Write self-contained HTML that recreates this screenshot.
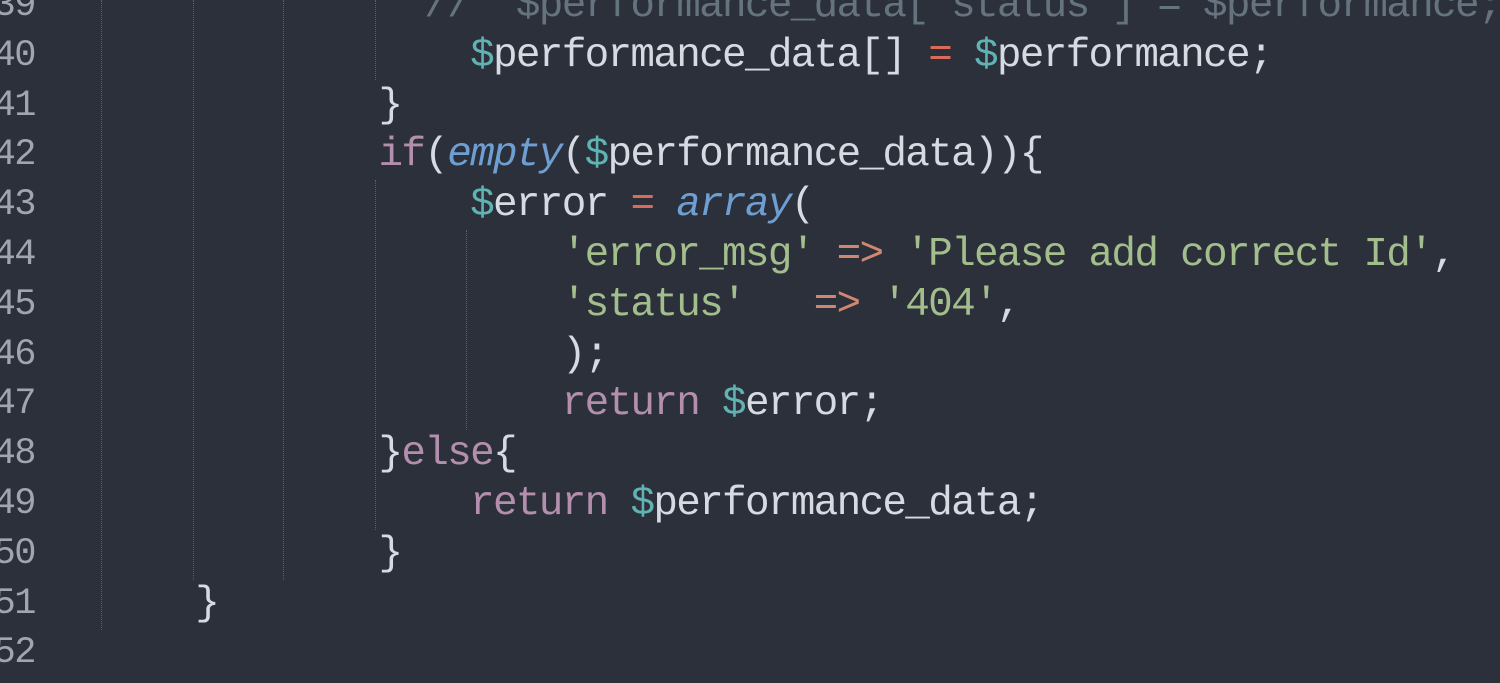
<!DOCTYPE html>
<html><head><meta charset="utf-8"><style>
html,body{margin:0;padding:0;width:1500px;height:683px;overflow:hidden;background:#2b303b;}
.code{position:absolute;left:12px;top:-18px;font-family:"Liberation Mono",monospace;font-size:41px;letter-spacing:-1.7px;line-height:49.8px;color:#d5dae3;white-space:pre;}
.ln{position:absolute;left:-62px;top:-18px;width:97px;text-align:right;font-family:"Liberation Mono",monospace;font-size:37px;letter-spacing:-1.5px;line-height:49.8px;color:#a0a6b0;white-space:pre;}
.g{position:absolute;width:0;border-left:1px dotted #56606c;}
.d{color:#5fb3b3}.k{color:#b48ead}.f{color:#6f9fd2;font-style:italic}.s{color:#a3be8c}.o{color:#d08770}.e{color:#d86b5a}.c{color:#65737e}
</style></head><body>
<div class="g" style="left:101px;top:0;height:630px"></div>
<div class="g" style="left:193px;top:0;height:580px"></div>
<div class="g" style="left:283px;top:0;height:580px"></div>
<div class="g" style="left:375px;top:0;height:80px"></div>
<div class="g" style="left:375px;top:180px;height:350px"></div>
<div class="g" style="left:466px;top:230px;height:200px"></div>
<div class="ln">39
40
41
42
43
44
45
46
47
48
49
50
51
52</div>
<div class="code"><span class="c">                  //  $performance_data['status'] = $performance;</span>
                    <span class="d">$</span>performance_data[] <span class="e">=</span> <span class="d">$</span>performance;
                }
                <span class="k">if</span>(<span class="f">empty</span>(<span class="d">$</span>performance_data)){
                    <span class="d">$</span>error <span class="e">=</span> <span class="f">array</span>(
                        <span class="s">'error_msg'</span> <span class="o">=&gt;</span> <span class="s">'Please add correct Id'</span>,
                        <span class="s">'status'</span>   <span class="o">=&gt;</span> <span class="s">'404'</span>,
                        );
                        <span class="k">return</span> <span class="d">$</span>error;
                }<span class="k">else</span>{
                    <span class="k">return</span> <span class="d">$</span>performance_data;
                }
        }
</div>
</body></html>
